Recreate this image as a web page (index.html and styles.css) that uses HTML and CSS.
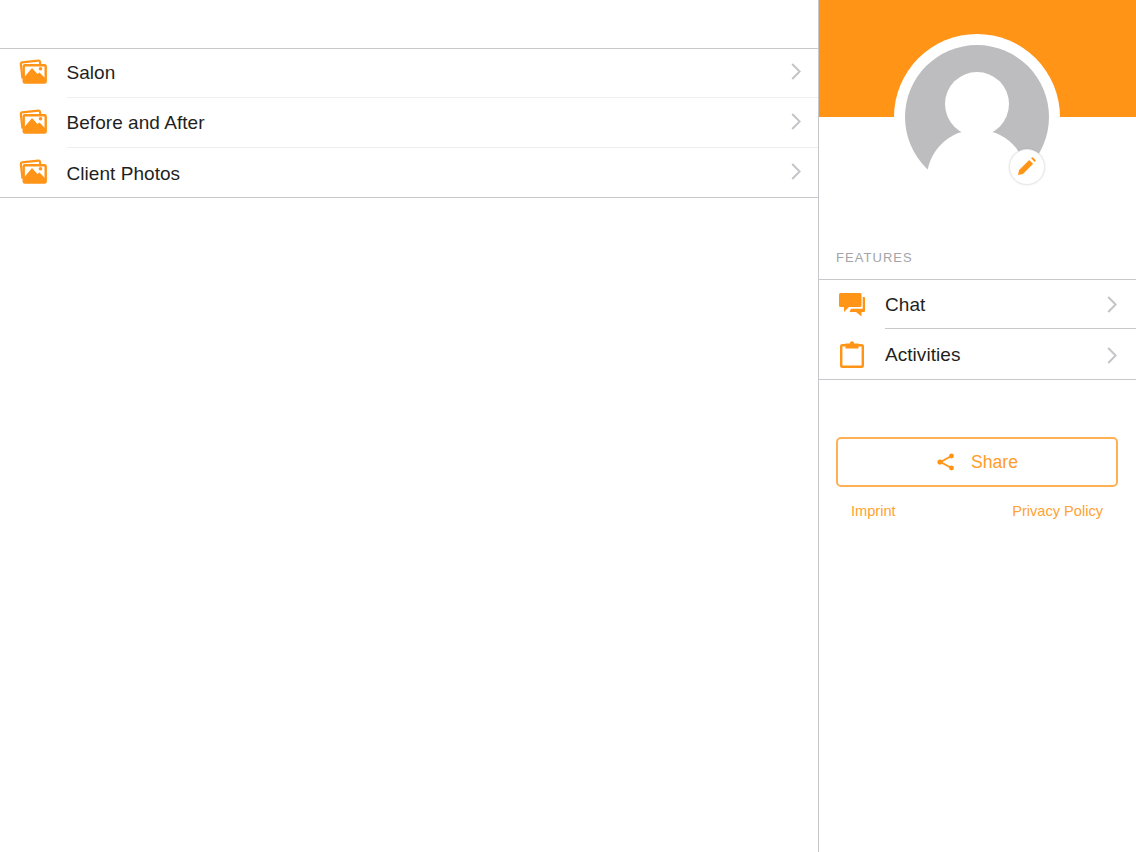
FILE: index.html
```html
<!DOCTYPE html>
<html lang="en">
<head>
<meta charset="utf-8">
<title>Gallery</title>
<link rel="stylesheet" href="styles.css">
</head>
<body>
<svg class="defs" width="0" height="0" aria-hidden="true">
  <defs>
    <symbol id="photos" viewBox="0 0 28 25">
      <path d="M3.500 19.500 L1.800 5 Q1.700 3.500 3 3.300 L19.500 1.600 Q20.800 1.500 21 2.800 L21.200 5" fill="none" stroke="#ff9416" stroke-width="2.200"/>
      <rect x="4.700" y="6.200" width="22" height="17.400" rx="1.200" fill="#fff" stroke="#ff9416" stroke-width="2.400"/>
      <path d="M5 23 L5 18.500 L13 9 L18.500 15 L20.500 13.500 L26 19 L26 23 Z" fill="#ff9416"/>
      <circle cx="21.500" cy="9.800" r="1.800" fill="#ff9416"/>
    </symbol>
    <symbol id="chevron" viewBox="0 0 10 17">
      <path d="M1.200 1 L8.700 8.500 L1.200 16" fill="none" stroke="#c4c4c8" stroke-width="2"/>
    </symbol>
  </defs>
</svg>
<div class="app">
  <main class="main">
    <div class="topbar"></div>
    <ul class="list list-main">
      <li class="row row-main">
        <svg class="icon-photos"><use href="#photos"/></svg>
        <div class="row-body"><span class="label">Salon</span><svg class="chevron"><use href="#chevron"/></svg></div>
      </li>
      <li class="row row-main">
        <svg class="icon-photos"><use href="#photos"/></svg>
        <div class="row-body"><span class="label">Before and After</span><svg class="chevron"><use href="#chevron"/></svg></div>
      </li>
      <li class="row row-main">
        <svg class="icon-photos"><use href="#photos"/></svg>
        <div class="row-body"><span class="label">Client Photos</span><svg class="chevron"><use href="#chevron"/></svg></div>
      </li>
    </ul>
  </main>
  <aside class="side">
    <header class="side-head">
      <div class="avatar">
        <svg class="avatar-img" viewBox="0 0 166 166">
          <circle cx="83" cy="83" r="83" fill="#fff"/>
          <circle cx="83" cy="83" r="72" fill="#bdbdbf"/>
          <circle cx="83" cy="70" r="32" fill="#fff"/>
          <circle cx="83" cy="146" r="50.500" fill="#fff"/>
        </svg>
        <button class="edit" aria-label="Edit">
          <svg width="18" height="18" viewBox="0 0 20 20">
            <path d="M0 20 L1.200 14.500 L12.500 3.200 L16.800 7.500 L5.500 18.800 Z" fill="#ff9416"/>
            <path d="M14.500 1.500 L15.500 .5 Q16 0 16.700 .5 L19.500 3.300 Q20 4 19.500 4.700 L18.500 5.500 Z" fill="#ff9416"/>
          </svg>
        </button>
      </div>
    </header>
    <h2 class="section-title">FEATURES</h2>
    <ul class="list list-side">
      <li class="row row-side">
        <svg class="icon-feature" viewBox="0 -1 26 28">
          <path d="M1.500 0 H21 Q22.500 0 22.500 1.500 V12.500 Q22.500 14 21 14 H10 L5 19 V14 H1.500 Q0 14 0 12.500 V1.500 Q0 0 1.500 0 Z" fill="#ff9416"/>
          <path d="M23.700 4 H25 Q26 4 26 5 V17.500 Q26 19 25 19 H22.500 V23.500 L17 19 H10.500 L12 15.800 H23.700 Z" fill="#ff9416"/>
        </svg>
        <div class="row-body"><span class="label">Chat</span><svg class="chevron"><use href="#chevron"/></svg></div>
      </li>
      <li class="row row-side">
        <svg class="icon-feature" viewBox="0 0 26 28">
          <path d="M7 4.200 H3.200 Q2.200 4.200 2.200 5.300 V24.700 Q2.200 25.800 3.200 25.800 H22.800 Q23.800 25.800 23.800 24.700 V5.300 Q23.800 4.200 22.800 4.200 H19" fill="none" stroke="#ff9416" stroke-width="2.400"/>
          <path d="M6.500 7.500 V2.500 H10.800 Q11 .3 13 .3 Q15 .3 15.200 2.500 H19.500 V7.500 Z" fill="#ff9416"/>
        </svg>
        <div class="row-body"><span class="label">Activities</span><svg class="chevron"><use href="#chevron"/></svg></div>
      </li>
    </ul>
    <div class="actions">
      <button class="share">
        <svg width="18" height="18" viewBox="0 0 18 18">
          <path d="M14.500 3 L3.500 9 L14.500 15" fill="none" stroke="#ff9416" stroke-width="1.800"/>
          <circle cx="14.500" cy="3" r="2.400" fill="#ff9416"/>
          <circle cx="3" cy="9" r="2.600" fill="#ff9416"/>
          <circle cx="14.500" cy="15" r="2.400" fill="#ff9416"/>
        </svg>
        <span>Share</span>
      </button>
      <nav class="links">
        <a class="link">Imprint</a>
        <a class="link">Privacy Policy</a>
      </nav>
    </div>
  </aside>
</div>
</body>
</html>
```
FILE: styles.css
```css
* { box-sizing: border-box; }
html, body { margin: 0; padding: 0; height: 100%; }
body {
  background: #fff;
  font-family: "Liberation Sans", Arial, sans-serif;
  color: #1f1f21;
  overflow: hidden;
}
.defs { position: absolute; }
.app { display: flex; height: 852px; }
.main { width: 819px; flex: none; border-right: 1px solid #c6c6ca; }
.topbar { height: 49px; border-bottom: 1px solid #c9c9cc; }
.list { list-style: none; margin: 0; padding: 0; }
.list-main { border-bottom: 1px solid #c9c9cc; }
.row { display: flex; align-items: stretch; }
.row-main { height: 50px; }
.row-main:first-child { height: 49px; }
.row-main:last-child { height: 49px; }
.row-main .row-body { padding-right: 17px; }
.row-main .chevron { margin-top: -3px; }
.row-main:last-child .row-body { border-bottom: 0; padding-top: 2px; }
.row-main:last-child .chevron { margin-top: -5px; }
.row-body {
  flex: 1;
  display: flex;
  align-items: center;
  justify-content: space-between;
  border-bottom: 1px solid #eeeeef;
}
.label { font-size: 19px; letter-spacing: .05px; }
.chevron { width: 10px; height: 17px; }
.icon-photos { width: 28px; height: 25px; margin: 11px 20px 0 18.500px; flex: none; }
.row-main:first-child .icon-photos { margin-top: 10px; }
.side { flex: 1; min-width: 0; }
.side-head { height: 117px; background: #ff9416; position: relative; }
.avatar { position: absolute; left: 75px; top: 34px; width: 166px; height: 166px; }
.avatar-img { display: block; width: 166px; height: 166px; }
.edit {
  position: absolute;
  left: 115px;
  top: 115px;
  width: 36px;
  height: 36px;
  padding: 0 0 2px;
  border-radius: 50%;
  border: 1px solid #eaeaec;
  background: #fff;
  box-shadow: 0 0 2px rgba(0, 0, 0, .12);
  display: flex;
  align-items: center;
  justify-content: center;
}
.section-title {
  margin: 133px 0 0 17px;
  height: 29px;
  font-size: 13px;
  line-height: 15px;
  font-weight: 400;
  letter-spacing: 1.050px;
  color: #a4a4a8;
}
.list-side { border-top: 1px solid #c9c9cc; border-bottom: 1px solid #c9c9cc; }
.row-side { height: 50px; }
.row-side:first-child { height: 49px; }
.row-side .row-body { border-bottom-color: #c9c9cc; padding: 1px 19px 0 0; }
.row-side:last-child .row-body { border-bottom: 0; }
.row-side:last-child .chevron { margin-top: 1px; }
.icon-feature { width: 26px; height: 28px; margin: 12px 20px 0 20px; flex: none; }
.actions { padding: 57px 18px 0 17px; }
.share {
  width: 282px;
  height: 50px;
  display: flex;
  align-items: center;
  justify-content: center;
  gap: 16px;
  padding: 0 0 0 1px;
  border: 2px solid #ffb055;
  border-radius: 5px;
  background: #fff;
  color: #ff9d2b;
  font: 17.600px "Liberation Sans", Arial, sans-serif;
}
.links { display: flex; justify-content: space-between; padding: 16px 15px 0; }
.link { font-size: 14.600px; line-height: 17px; color: #ffa233; }
```
